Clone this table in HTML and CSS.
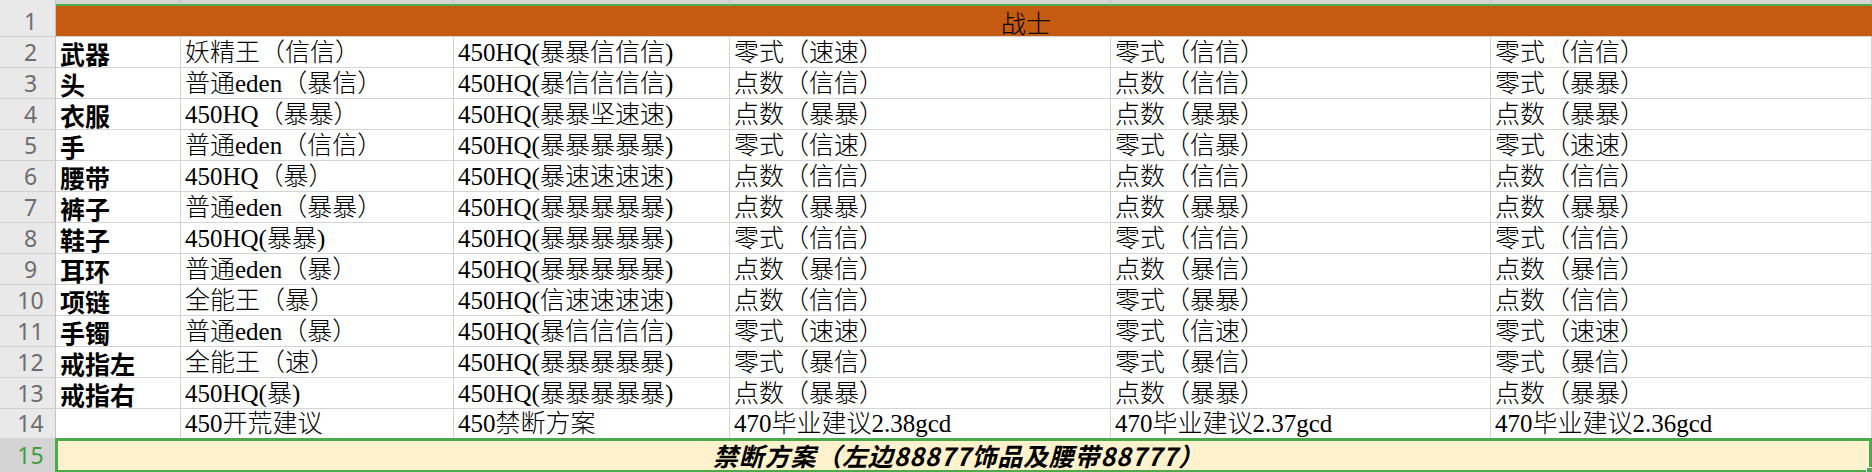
FILE: index.html
```html
<!DOCTYPE html>
<html lang="zh">
<head>
<meta charset="utf-8">
<title>战士</title>
<link rel="stylesheet" href="styles.css">
</head>
<body>
<div class="sheet">
  <div class="colhead">
    <div class="ch corner"></div>
    <div class="ch"></div><div class="ch"></div><div class="ch"></div>
    <div class="ch"></div><div class="ch"></div><div class="ch"></div>
  </div>
  <div class="grid">
    <div class="rh">1</div><div class="title">战士</div>

    <div class="rh">2</div><div class="c a">武器</div><div class="c">妖精王（信信）</div><div class="c">450HQ(暴暴信信信)</div><div class="c">零式（速速）</div><div class="c">零式（信信）</div><div class="c">零式（信信）</div>
    <div class="rh">3</div><div class="c a">头</div><div class="c">普通eden（暴信）</div><div class="c">450HQ(暴信信信信)</div><div class="c">点数（信信）</div><div class="c">点数（信信）</div><div class="c">零式（暴暴）</div>
    <div class="rh">4</div><div class="c a">衣服</div><div class="c">450HQ（暴暴）</div><div class="c">450HQ(暴暴坚速速)</div><div class="c">点数（暴暴）</div><div class="c">点数（暴暴）</div><div class="c">点数（暴暴）</div>
    <div class="rh">5</div><div class="c a">手</div><div class="c">普通eden（信信）</div><div class="c">450HQ(暴暴暴暴暴)</div><div class="c">零式（信速）</div><div class="c">零式（信暴）</div><div class="c">零式（速速）</div>
    <div class="rh">6</div><div class="c a">腰带</div><div class="c">450HQ（暴）</div><div class="c">450HQ(暴速速速速)</div><div class="c">点数（信信）</div><div class="c">点数（信信）</div><div class="c">点数（信信）</div>
    <div class="rh">7</div><div class="c a">裤子</div><div class="c">普通eden（暴暴）</div><div class="c">450HQ(暴暴暴暴暴)</div><div class="c">点数（暴暴）</div><div class="c">点数（暴暴）</div><div class="c">点数（暴暴）</div>
    <div class="rh">8</div><div class="c a">鞋子</div><div class="c">450HQ(暴暴)</div><div class="c">450HQ(暴暴暴暴暴)</div><div class="c">零式（信信）</div><div class="c">零式（信信）</div><div class="c">零式（信信）</div>
    <div class="rh">9</div><div class="c a">耳环</div><div class="c">普通eden（暴）</div><div class="c">450HQ(暴暴暴暴暴)</div><div class="c">点数（暴信）</div><div class="c">点数（暴信）</div><div class="c">点数（暴信）</div>
    <div class="rh">10</div><div class="c a">项链</div><div class="c">全能王（暴）</div><div class="c">450HQ(信速速速速)</div><div class="c">点数（信信）</div><div class="c">零式（暴暴）</div><div class="c">点数（信信）</div>
    <div class="rh">11</div><div class="c a">手镯</div><div class="c">普通eden（暴）</div><div class="c">450HQ(暴信信信信)</div><div class="c">零式（速速）</div><div class="c">零式（信速）</div><div class="c">零式（速速）</div>
    <div class="rh">12</div><div class="c a">戒指左</div><div class="c">全能王（速）</div><div class="c">450HQ(暴暴暴暴暴)</div><div class="c">零式（暴信）</div><div class="c">零式（暴信）</div><div class="c">零式（暴信）</div>
    <div class="rh">13</div><div class="c a">戒指右</div><div class="c">450HQ(暴)</div><div class="c">450HQ(暴暴暴暴暴)</div><div class="c">点数（暴暴）</div><div class="c">点数（暴暴）</div><div class="c">点数（暴暴）</div>
    <div class="rh">14</div><div class="c a"></div><div class="c">450开荒建议</div><div class="c">450禁断方案</div><div class="c">470毕业建议2.38gcd</div><div class="c">470毕业建议2.37gcd</div><div class="c">470毕业建议2.36gcd</div>

    <div class="rh sel">15</div><div class="note">禁断方案（左边88877饰品及腰带88777）<span class="handle"></span></div>
  </div>
</div>
</body>
</html>
```

FILE: styles.css
```css
html, body {
  margin: 0;
  padding: 0;
  background: #ffffff;
  overflow: hidden;
}

.sheet {
  width: 1872px;
  height: 472px;
  overflow: hidden;
}

.colhead {
  display: grid;
  grid-template-columns: 56px 125px 273px 276px 381px 380px 381px;
  height: 6px;
}

.ch {
  box-sizing: border-box;
  height: 6px;
  background: #d6d6d6;
  border-right: 1px solid #bdbdbd;
  border-bottom: 2px solid #4caa4c;
}

.ch.corner {
  background: #e8e8e8;
  border-bottom: none;
  border-right: 1px solid #c4c4c4;
}

.grid {
  display: grid;
  grid-template-columns: 56px 125px 273px 276px 381px 380px 381px;
  grid-template-rows: repeat(13, 31px) 30px 34px;
}

.rh {
  box-sizing: border-box;
  background: #e9e9e9;
  border-right: 1px solid #c6c6c6;
  border-bottom: 1px solid #d0d0d0;
  color: #6e6e6e;
  font: 400 23px/1 "Noto Sans", "Liberation Sans", sans-serif;
  display: flex;
  align-items: center;
  justify-content: center;
  padding-left: 6px;
}

.rh.sel {
  background: #d4d4d4;
  color: #3f9e3f;
  margin-top: -1px;
}

.c {
  box-sizing: border-box;
  border-right: 1px solid #d4d4d4;
  border-bottom: 1px solid #d4d4d4;
  padding-left: 4px;
  display: flex;
  align-items: flex-end;
  white-space: nowrap;
  color: #000000;
  font: 300 25px/28px "Liberation Serif", "Noto Sans CJK SC", serif;
}

.c.a {
  font: 700 25px/28px "Noto Sans CJK SC", sans-serif;
}

.title {
  grid-column: 2 / -1;
  box-sizing: border-box;
  background: #c55a11;
  border-bottom: 1px solid #d4d4d4;
  display: flex;
  align-items: flex-end;
  justify-content: center;
  padding-left: 124px;
  color: #000000;
  font: 300 25px/28px "Noto Sans CJK SC", serif;
}

.note {
  grid-column: 2 / -1;
  position: relative;
  box-sizing: border-box;
  margin-top: -1px;
  margin-left: -1px;
  background: #fff2cc;
  border: 3px solid #4caa4c;
  display: flex;
  align-items: center;
  justify-content: center;
  padding-right: 10px;
  color: #000000;
  letter-spacing: 0.8px;
  font: italic 700 25px/1 "Noto Sans CJK SC", sans-serif;
}

.handle {
  position: absolute;
  right: -4px;
  bottom: -4px;
  width: 6px;
  height: 6px;
  background: #4caa4c;
  border-left: 1px solid #ffffff;
  border-top: 1px solid #ffffff;
}
```
